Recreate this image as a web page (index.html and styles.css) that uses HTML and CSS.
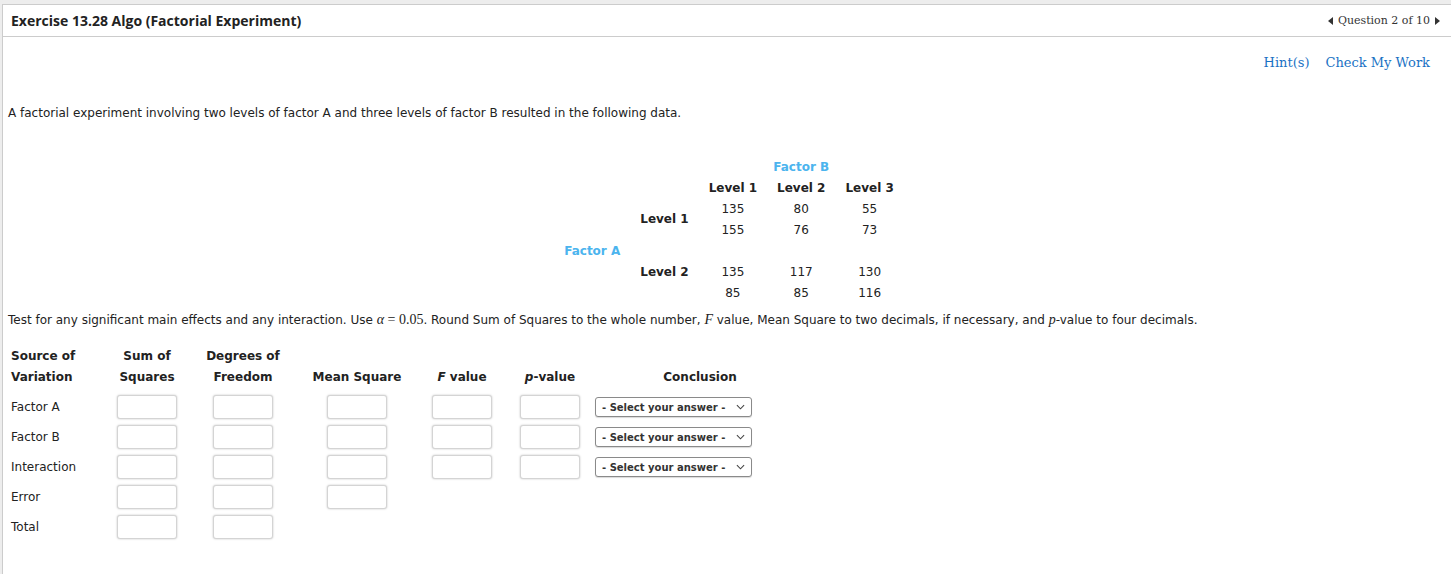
FILE: index.html
```html
<!DOCTYPE html>
<html lang="en">
<head>
  <meta charset="UTF-8">
  <title>Exercise 13.28 Algo (Factorial Experiment)</title>
  <link rel="stylesheet" href="styles.css">
</head>
<body>
  <div class="pagina">
    <header class="topo">
      <h1 class="titulo">Exercise 13.28 Algo (Factorial Experiment)</h1>
      <div class="navegacao">
        <span class="seta seta-esq"></span>
        <span>Question 2 of 10</span>
        <span class="seta seta-dir"></span>
      </div>
    </header>

    <div class="acoes">
      <a href="#">Hint(s)</a>
      <a href="#">Check My Work</a>
    </div>

    <p class="enunciado">A factorial experiment involving two levels of factor A and three levels of factor B resulted in the following data.</p>

    <table class="dados">
      <tr>
        <td></td><td></td>
        <td colspan="3" class="fator">Factor B</td>
      </tr>
      <tr>
        <td></td><td></td>
        <th>Level 1</th><th>Level 2</th><th>Level 3</th>
      </tr>
      <tr>
        <td></td>
        <th rowspan="2">Level 1</th>
        <td>135</td><td>80</td><td>55</td>
      </tr>
      <tr>
        <td></td>
        <td>155</td><td>76</td><td>73</td>
      </tr>
      <tr>
        <td class="fator">Factor A</td>
        <td></td><td></td><td></td><td></td>
      </tr>
      <tr>
        <td></td>
        <th>Level 2</th>
        <td>135</td><td>117</td><td>130</td>
      </tr>
      <tr>
        <td></td><td></td>
        <td>85</td><td>85</td><td>116</td>
      </tr>
    </table>

    <p class="enunciado instrucao">Test for any significant main effects and any interaction. Use <span class="mat"><i>α</i> = 0.05</span>. Round Sum of Squares to the whole number, <span class="mat"><i>F</i></span> value, Mean Square to two decimals, if necessary, and <span class="mat"><i>p</i></span>-value to four decimals.</p>

    <table class="anova">
      <tr class="cab">
        <th class="c1">Source of</th>
        <th class="c2">Sum of</th>
        <th class="c3">Degrees of</th>
        <th class="c4"></th>
        <th class="c5"></th>
        <th class="c6"></th>
        <th class="c7"></th>
      </tr>
      <tr class="cab cab-fim">
        <th class="c1">Variation</th>
        <th>Squares</th>
        <th>Freedom</th>
        <th>Mean Square</th>
        <th><i>F</i> value</th>
        <th><i>p</i>-value</th>
        <th>Conclusion</th>
      </tr>
      <tr>
        <td class="c1">Factor A</td>
        <td><input type="text"></td>
        <td><input type="text"></td>
        <td><input type="text"></td>
        <td><input type="text"></td>
        <td><input type="text"></td>
        <td class="c7"><div class="escolha"><select><option>- Select your answer -</option></select><svg viewBox="0 0 10 6"><path d="M1 1l4 4 4-4" /></svg></div></td>
      </tr>
      <tr>
        <td class="c1">Factor B</td>
        <td><input type="text"></td>
        <td><input type="text"></td>
        <td><input type="text"></td>
        <td><input type="text"></td>
        <td><input type="text"></td>
        <td class="c7"><div class="escolha"><select><option>- Select your answer -</option></select><svg viewBox="0 0 10 6"><path d="M1 1l4 4 4-4" /></svg></div></td>
      </tr>
      <tr>
        <td class="c1">Interaction</td>
        <td><input type="text"></td>
        <td><input type="text"></td>
        <td><input type="text"></td>
        <td><input type="text"></td>
        <td><input type="text"></td>
        <td class="c7"><div class="escolha"><select><option>- Select your answer -</option></select><svg viewBox="0 0 10 6"><path d="M1 1l4 4 4-4" /></svg></div></td>
      </tr>
      <tr>
        <td class="c1">Error</td>
        <td><input type="text"></td>
        <td><input type="text"></td>
        <td><input type="text"></td>
        <td></td><td></td><td></td>
      </tr>
      <tr>
        <td class="c1">Total</td>
        <td><input type="text"></td>
        <td><input type="text"></td>
        <td></td><td></td><td></td><td></td>
      </tr>
    </table>
  </div>
</body>
</html>
```

FILE: styles.css
```css
:root {
  --fundo-cinza: #ededed;
  --borda: #cccccc;
  --texto: #222;
  --azul-link: #1a72c4;
  --azul-fator: #4bb4ee;
}

body {
  margin: 0;
  background-color: var(--fundo-cinza);
  color: var(--texto);
  font-family: "DejaVu Sans", Verdana, sans-serif;
  font-size: 12px;
}

.pagina {
  margin-top: 4px;
  margin-left: 2px;
  background-color: #fff;
  border-top: 1px solid var(--borda);
  border-left: 1px solid var(--borda);
  min-height: 570px;
}

.topo {
  display: flex;
  justify-content: space-between;
  align-items: center;
  height: 31px;
  border-bottom: 1px solid var(--borda);
  padding: 0 11px 0 8px;
}

.titulo {
  margin: 0;
  font-family: "Open Sans", sans-serif;
  font-size: 14px;
  font-weight: bold;
  color: #222;
}

.navegacao {
  display: flex;
  align-items: center;
  gap: 5px;
  font-family: "DejaVu Serif", Georgia, serif;
  font-size: 11px;
  color: #333;
}

.seta {
  width: 0;
  height: 0;
  border-top: 4px solid transparent;
  border-bottom: 4px solid transparent;
}

.seta-esq {
  border-right: 5px solid #333;
}

.seta-dir {
  border-left: 5px solid #333;
}

.acoes {
  display: flex;
  justify-content: flex-end;
  gap: 16px;
  padding: 18px 21px 0 0;
}

.acoes a {
  font-family: "DejaVu Serif", Georgia, serif;
  font-size: 13px;
  color: var(--azul-link);
  text-decoration: none;
}

.enunciado {
  margin: 35px 0 0 5px;
  line-height: 16px;
}

.instrucao {
  margin-top: 9px;
}

.mat {
  font-family: "Liberation Serif", "DejaVu Serif", serif;
  font-size: 14px;
}

/* tabela de dados */
.dados {
  margin: 35px auto 0;
  border-collapse: collapse;
  position: relative;
  left: 2px;
}

.dados td,
.dados th {
  height: 21px;
  padding: 0 10px;
  text-align: center;
  white-space: nowrap;
}

.dados th {
  font-weight: bold;
}

.fator {
  color: var(--azul-fator);
  font-weight: bold;
}

/* tabela anova */
.anova {
  margin: 17px 0 0 5px;
  border-collapse: collapse;
}

.anova th,
.anova td {
  padding: 0;
  text-align: center;
  white-space: nowrap;
}

.anova .cab th {
  height: 21px;
  font-weight: bold;
}

.anova .cab-fim th {
  padding-bottom: 5px;
}

.anova td {
  height: 30px;
}

.anova .c1 {
  width: 96px;
  text-align: left;
  padding-left: 3px;
}

.c2 { width: 80px; }
.c3 { width: 112px; }
.c4 { width: 116px; }
.c5 { width: 94px; }
.c6 { width: 82px; }
.c7 { width: 218px; }

.anova td.c7 {
  text-align: left;
}

.anova input {
  width: 60px;
  height: 24px;
  box-sizing: border-box;
  border: 1px solid #d4d4d4;
  border-radius: 3px;
  box-shadow: 0 0 2px rgba(0, 0, 0, 0.25);
  vertical-align: middle;
}

.escolha {
  position: relative;
  display: inline-block;
  margin-left: 4px;
  vertical-align: middle;
}

.escolha select {
  appearance: none;
  width: 157px;
  height: 20px;
  border: 1px solid #8a8a8a;
  border-radius: 3px;
  background: #fff;
  padding: 0 0 0 6px;
  font-family: "DejaVu Sans", Verdana, sans-serif;
  font-size: 10px;
  font-weight: bold;
  color: #333;
  box-shadow: 0 1px 1px rgba(0, 0, 0, 0.15);
}

.escolha svg {
  position: absolute;
  right: 7px;
  top: 7px;
  width: 9px;
  height: 6px;
  fill: none;
  stroke: #444;
  stroke-width: 1.2;
}
```
